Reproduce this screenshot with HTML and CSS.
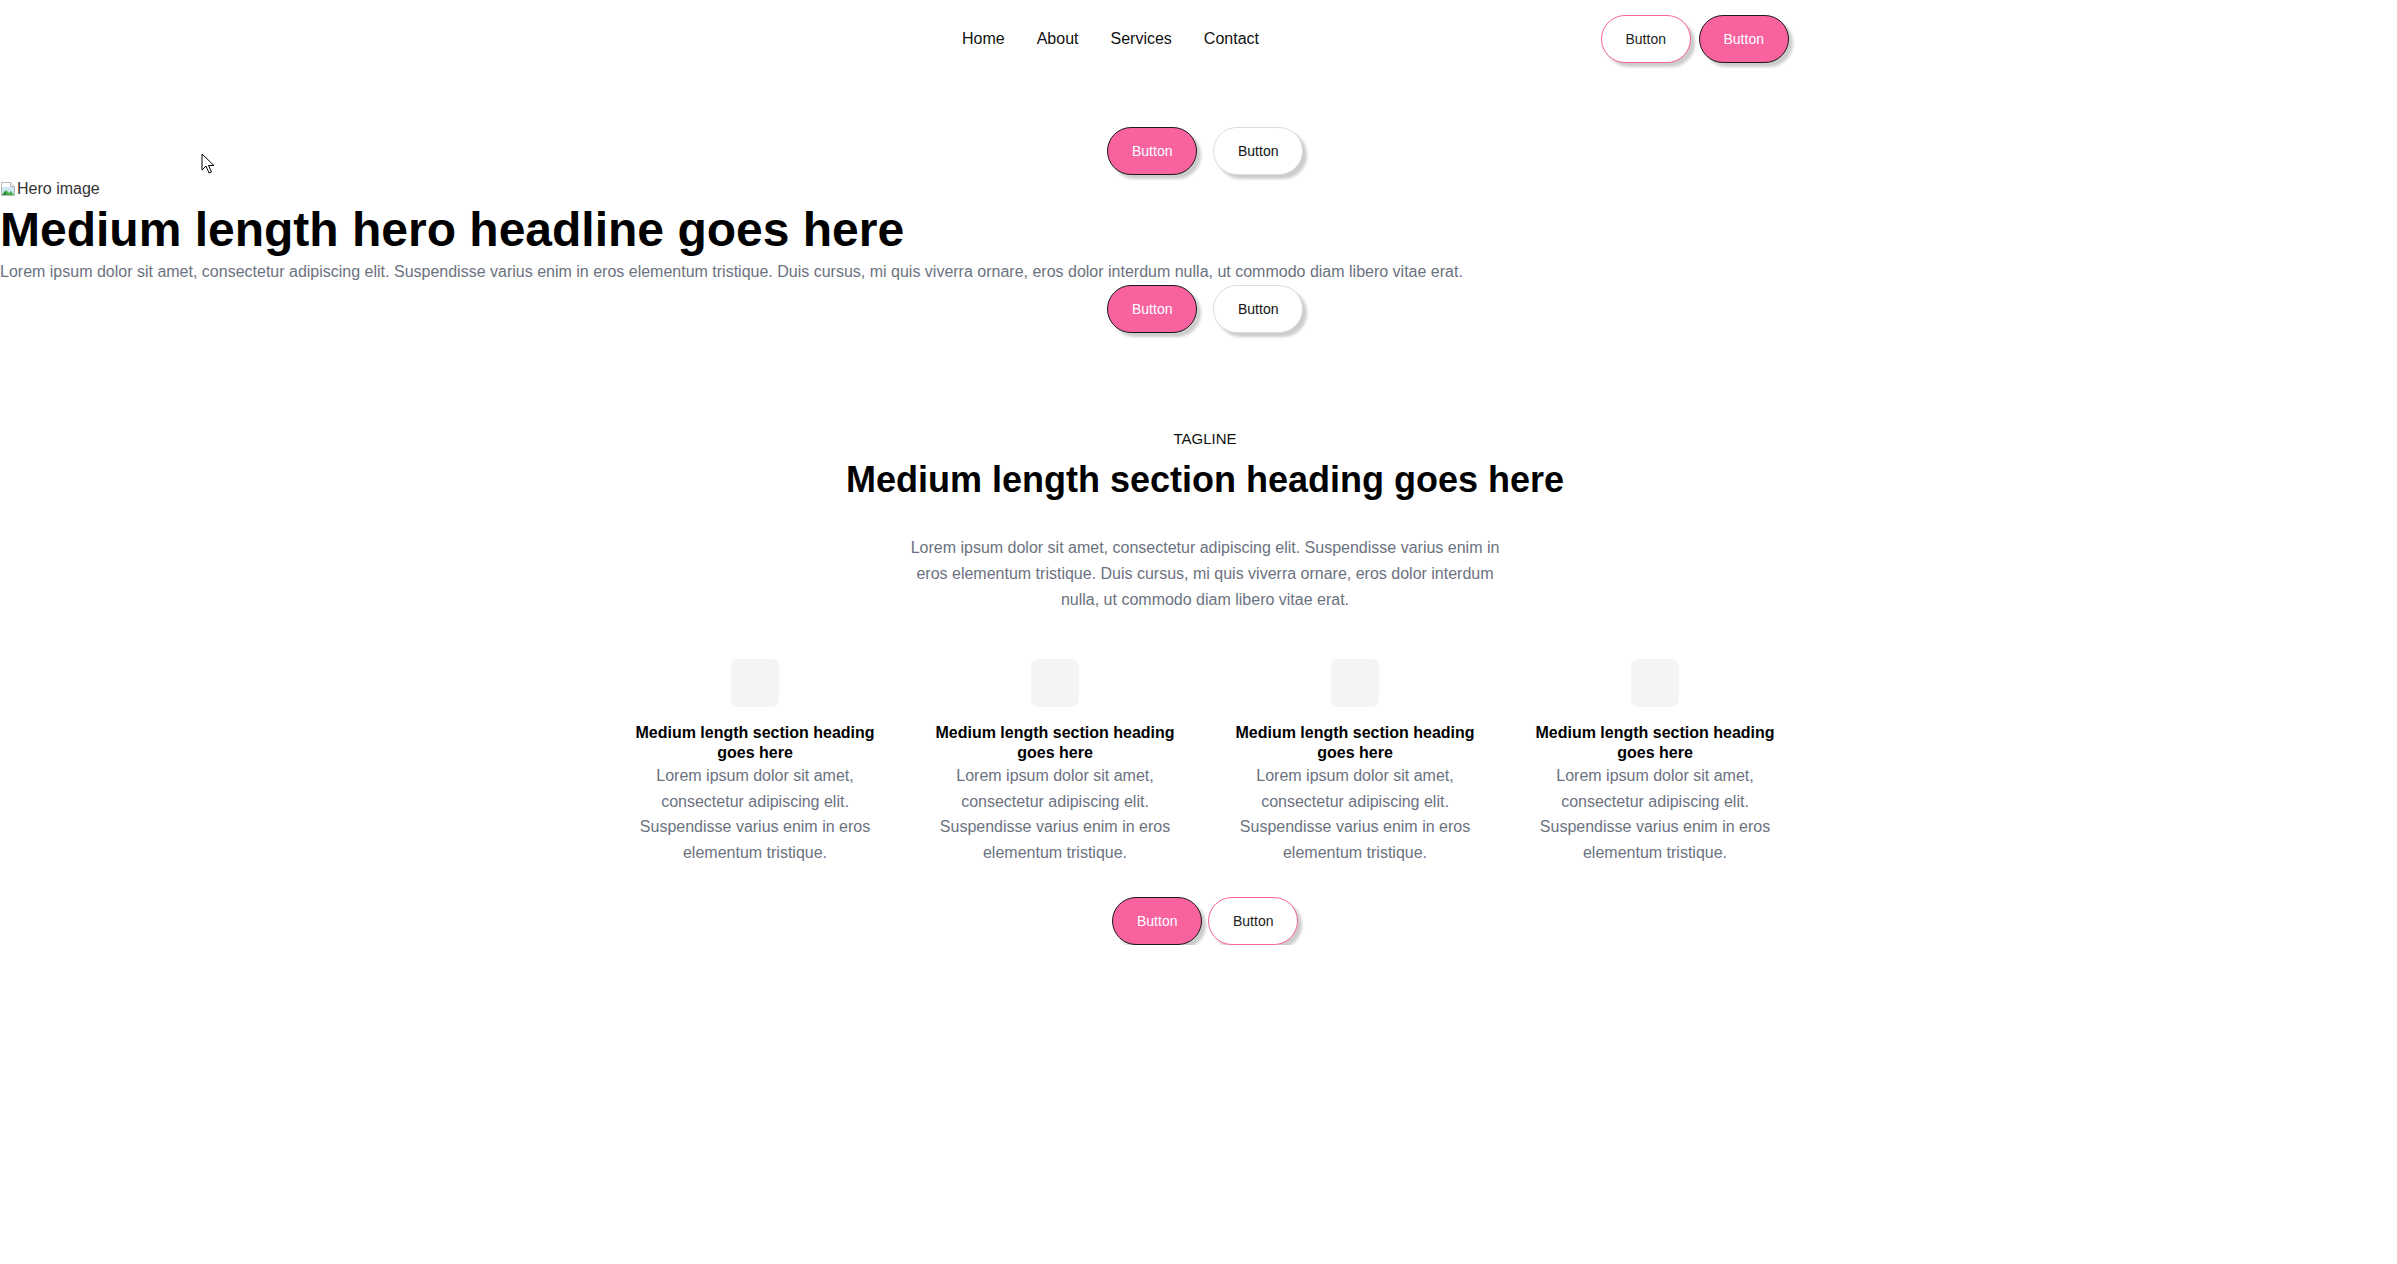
FILE: index.html
```html
<!DOCTYPE html>
<html lang="en">
<head>
<meta charset="utf-8">
<title>Landing</title>
<link rel="stylesheet" href="styles.css">
</head>
<body>
<header class="navbar">
  <div class="nav-inner">
    <div class="logo"></div>
    <nav class="nav-links">
      <a href="#">Home</a>
      <a href="#">About</a>
      <a href="#">Services</a>
      <a href="#">Contact</a>
    </nav>
    <div class="nav-actions">
      <button class="btn btn-outline-pink">Button</button>
      <button class="btn btn-pink">Button</button>
    </div>
  </div>
</header>

<section class="hero">
  <div class="btn-row btn-row-wide">
    <button class="btn btn-pink">Button</button>
    <button class="btn btn-outline-gray">Button</button>
  </div>
  <div class="hero-img">
    <svg class="broken-icon" width="16" height="16" viewBox="0 0 16 16" aria-hidden="true">
      <path d="M1.5 1.5h9l4 4v9h-13z" fill="#fff" stroke="#b9b9b9"/>
      <path d="M10.5 1.5v4h4" fill="#eee" stroke="#b9b9b9"/>
      <rect x="2" y="6" width="12" height="8" fill="#cfe6f7"/>
      <path d="M2 14l4-5 3 3 2-2 3 4z" fill="#4caf50"/>
      <path d="M2 14l3-4 2 4z" fill="#2e8b3a"/>
    </svg><span>Hero image</span>
  </div>
  <h1 class="hero-title">Medium length hero headline goes here</h1>
  <p class="hero-text">Lorem ipsum dolor sit amet, consectetur adipiscing elit. Suspendisse varius enim in eros elementum tristique. Duis cursus, mi quis viverra ornare, eros dolor interdum nulla, ut commodo diam libero vitae erat.</p>
  <div class="btn-row btn-row-wide">
    <button class="btn btn-pink">Button</button>
    <button class="btn btn-outline-gray">Button</button>
  </div>
  <svg class="cursor" width="14" height="22" viewBox="0 0 14 22" aria-hidden="true">
    <path d="M1 1v16l4-4 3 7 2.5-1-3-6.5h5.5z" fill="#fff" stroke="#000" stroke-width="1" stroke-linejoin="round"/>
  </svg>
</section>

<section class="features">
  <p class="tagline">TAGLINE</p>
  <h2 class="section-title">Medium length section heading goes here</h2>
  <p class="section-text">Lorem ipsum dolor sit amet, consectetur adipiscing elit. Suspendisse varius enim in eros elementum tristique. Duis cursus, mi quis viverra ornare, eros dolor interdum nulla, ut commodo diam libero vitae erat.</p>
  <div class="feature-grid">
    <div class="feature">
      <div class="feature-icon"></div>
      <h3>Medium length section heading goes here</h3>
      <p>Lorem ipsum dolor sit amet, consectetur adipiscing elit. Suspendisse varius enim in eros elementum tristique.</p>
    </div>
    <div class="feature">
      <div class="feature-icon"></div>
      <h3>Medium length section heading goes here</h3>
      <p>Lorem ipsum dolor sit amet, consectetur adipiscing elit. Suspendisse varius enim in eros elementum tristique.</p>
    </div>
    <div class="feature">
      <div class="feature-icon"></div>
      <h3>Medium length section heading goes here</h3>
      <p>Lorem ipsum dolor sit amet, consectetur adipiscing elit. Suspendisse varius enim in eros elementum tristique.</p>
    </div>
    <div class="feature">
      <div class="feature-icon"></div>
      <h3>Medium length section heading goes here</h3>
      <p>Lorem ipsum dolor sit amet, consectetur adipiscing elit. Suspendisse varius enim in eros elementum tristique.</p>
    </div>
  </div>
  <div class="btn-row btn-row-tight">
    <button class="btn btn-pink">Button</button>
    <button class="btn btn-outline-pink">Button</button>
  </div>
</section>
</body>
</html>
```
FILE: styles.css
```css
* { box-sizing: border-box; }

html, body {
  margin: 0;
  padding: 0;
  background: #fff;
  color: #000;
  font-family: "Liberation Sans", Arial, sans-serif;
}

/* NAV */
.navbar {
  padding: 15px 0;
}
.nav-inner {
  width: 1168px;
  margin-left: calc(50% - 578px);
  display: flex;
  justify-content: space-between;
  align-items: center;
}
.nav-links {
  display: flex;
  gap: 32px;
}
.nav-links a {
  color: #111;
  text-decoration: none;
  font-size: 16px;
  line-height: 20px;
}
.nav-actions {
  display: flex;
  gap: 8px;
}

/* BUTTONS */
.btn {
  font-family: "Liberation Sans", Arial, sans-serif;
  font-size: 14px;
  line-height: 22px;
  padding: 12px 24px;
  border-radius: 999px;
  border: 1px solid transparent;
  box-shadow: 4px 4px 3px rgba(0, 0, 0, 0.2);
  cursor: pointer;
  width: 90px;
  text-align: center;
}
.btn-pink {
  background: #f7629f;
  color: #fff;
  border-color: #1a1a1a;
}
.btn-outline-pink {
  background: #fff;
  color: #222;
  border-color: #f7629f;
}
.btn-outline-gray {
  background: #fff;
  color: #111;
  border-color: #dcdcdc;
}

.btn-row {
  display: flex;
  justify-content: center;
  gap: 8px;
  padding-left: 13px;
}
.btn-row-wide {
  gap: 16px;
}

/* HERO */
.hero {
  position: relative;
  padding-top: 49px;
}
.hero-img {
  margin-top: 4px;
  height: 20px;
  display: flex;
  align-items: center;
  font-size: 16px;
  color: #333;
}
.broken-icon {
  display: block;
  flex: none;
  margin-right: 1px;
}
.hero-title {
  margin: 2px 0 0;
  font-size: 48px;
  line-height: 1.2;
  font-weight: 700;
  color: #000;
}
.hero-text {
  margin: 0;
  font-size: 16px;
  line-height: 1.6;
  color: #6b7280;
}
.hero .btn-row:last-of-type {
  margin-top: 1px;
}
.cursor {
  position: absolute;
  left: 201px;
  top: 75px;
}

/* FEATURES */
.features {
  padding-top: 95px;
  padding-left: 13px;
  text-align: center;
}
.tagline {
  margin: 0;
  font-size: 15px;
  line-height: 21px;
  color: #111;
}
.section-title {
  margin: 9px 0 0;
  font-size: 36px;
  line-height: 1.2;
  font-weight: 700;
}
.section-text {
  max-width: 600px;
  margin: 34px auto 0;
  font-size: 16px;
  line-height: 1.6;
  color: #6b7280;
}
.feature-grid {
  width: 1168px;
  margin: 47px auto 0;
  display: grid;
  grid-template-columns: repeat(4, 1fr);
  gap: 32px;
}
.feature {
  display: flex;
  flex-direction: column;
  align-items: center;
}
.feature-icon {
  width: 48px;
  height: 48px;
  border-radius: 8px;
  background: #f3f4f6;
}
.feature h3 {
  margin: 16px 0 0;
  font-size: 16px;
  line-height: 20px;
  font-weight: 700;
}
.feature p {
  margin: 0;
  font-size: 16px;
  line-height: 1.6;
  color: #6b7280;
}
.features .btn-row-tight {
  margin-top: 31px;
  padding-left: 0;
  gap: 6px;
}
```
